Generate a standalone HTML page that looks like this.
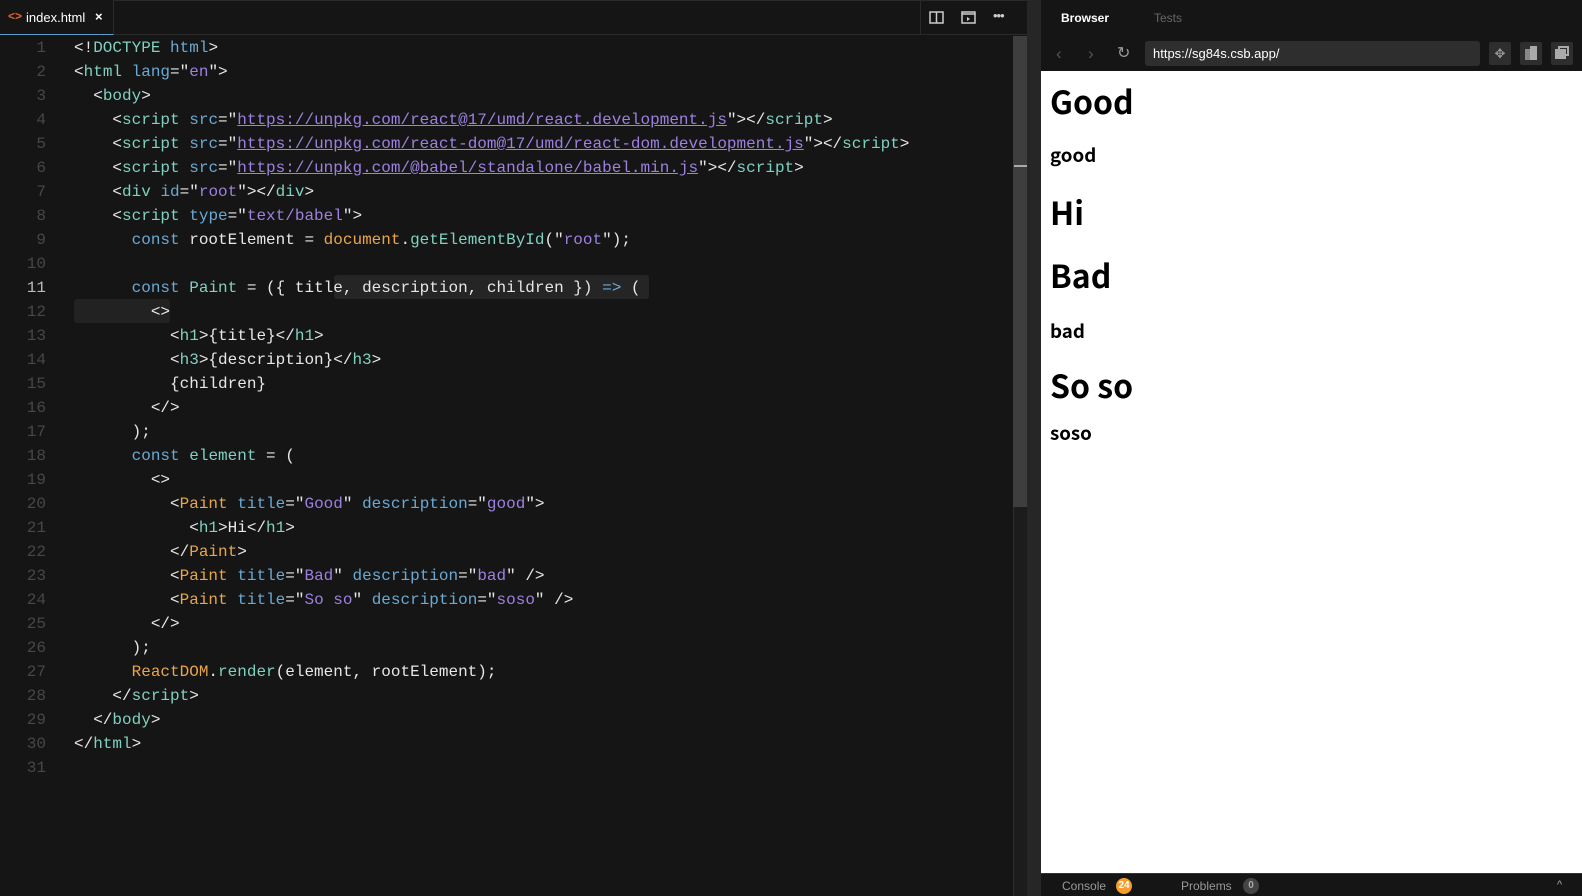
<!DOCTYPE html>
<html><head><meta charset="utf-8"><style>
*{margin:0;padding:0;box-sizing:border-box}
body{width:1582px;height:896px;background:#151515;position:relative;overflow:hidden;font-family:"Liberation Sans",sans-serif}
.topbar{position:absolute;left:0;top:0;width:1027px;height:35px;background:#151515;border-bottom:1px solid #2a2a2a;border-top:1px solid #2a2a2a}
.tab{position:absolute;left:0;top:0;width:114px;height:35px;background:#151515;border-right:1px solid #2a2a2a;border-bottom:1px solid #5a9fd0;color:#fff;font-size:13px}
.code{position:absolute;left:0;top:0;font-family:"Liberation Mono",monospace;font-size:16px;color:#e6e6e6}
.ln{position:absolute;left:0;width:46px;text-align:right;color:#474747;line-height:24px;height:24px}
.cl{position:absolute;left:74px;line-height:24px;height:24px;white-space:pre}
.t{color:#7fd1c0}.a{color:#6aa9d4}.s{color:#9d80e0}.u{color:#9d80e0;text-decoration:underline}.o{color:#e8a64b}.k{color:#6aa9d4}.f{color:#7fd1c0}
.prev{position:absolute;left:1041px;top:71px;width:541px;height:802px;background:#fff}
.h1{position:absolute;left:9px;font-family:"Noto Sans CJK KR",sans-serif;font-weight:bold;font-size:32px;line-height:32px;color:#000}
.h3{position:absolute;left:9px;font-family:"Noto Sans CJK KR",sans-serif;font-weight:bold;font-size:18.7px;line-height:19px;color:#000}
</style></head><body>
<div class="topbar"></div>
<div class="tab"><span style="position:absolute;left:8px;top:9px;color:#e8622c;font-size:12px;font-weight:bold">&lt;&gt;</span><span style="position:absolute;left:26px;top:10px">index.html</span><span style="position:absolute;left:95px;top:9px;font-weight:bold">×</span></div>
<div style="position:absolute;left:920px;top:0;width:1px;height:35px;background:#2a2a2a"></div>
<svg style="position:absolute;left:929px;top:11px" width="16" height="14"><rect x="1" y="1" width="13" height="11" fill="none" stroke="#ccc" stroke-width="1.5"/><line x1="7.5" y1="1" x2="7.5" y2="12" stroke="#ccc" stroke-width="1.5"/></svg>
<svg style="position:absolute;left:961px;top:11px" width="16" height="14"><rect x="1" y="1" width="13" height="11" fill="none" stroke="#ccc" stroke-width="1.5"/><line x1="1" y1="3" x2="14" y2="3" stroke="#ccc" stroke-width="1.5"/><path d="M6 6l3 2-3 2z" fill="#ccc"/></svg>
<div style="position:absolute;left:993px;top:8px;color:#ccc;font-size:13px;letter-spacing:-1px">•••</div>
<div style="position:absolute;left:1013px;top:36px;width:14px;height:860px;background:#1c1c1c;border-left:1px solid #2e2e2e"></div>
<div style="position:absolute;left:1013px;top:36px;width:14px;height:471px;background:#3e3e3e"></div>
<div style="position:absolute;left:1014px;top:165px;width:13px;height:2px;background:#aaa"></div>
<div style="position:absolute;left:1027px;top:0;width:14px;height:896px;background:#262626"></div>
<div style="position:absolute;left:1041px;top:0;width:541px;height:71px;background:#151515"></div>
<div style="position:absolute;left:1061px;top:11px;color:#fff;font-size:12px;font-weight:bold">Browser</div>
<div style="position:absolute;left:1154px;top:11px;color:#666;font-size:12px">Tests</div>
<div style="position:absolute;left:1056px;top:44px;color:#555;font-size:17px">‹</div>
<div style="position:absolute;left:1088px;top:44px;color:#555;font-size:17px">›</div>
<div style="position:absolute;left:1117px;top:43px;color:#999;font-size:16px">↻</div>
<div style="position:absolute;left:1145px;top:41px;width:335px;height:25px;background:#2e2e2e;border-radius:3px;color:#fff;font-size:13px;padding:5px 8px">https://sg84s.csb.app/</div>
<div style="position:absolute;left:1489px;top:42px;width:22px;height:23px;background:#2e2e2e;border-radius:2px;color:#999;font-size:13px;text-align:center;line-height:23px">✥</div>
<div style="position:absolute;left:1520px;top:42px;width:22px;height:23px;background:#2e2e2e;border-radius:2px"><div style="position:absolute;left:5px;top:7px;width:6px;height:11px;background:#888"></div><div style="position:absolute;left:10px;top:4px;width:7px;height:14px;background:#aaa"></div></div>
<div style="position:absolute;left:1551px;top:42px;width:22px;height:23px;background:#2e2e2e;border-radius:2px"><div style="position:absolute;left:4px;top:7px;width:11px;height:10px;background:#aaa"></div><div style="position:absolute;left:7px;top:4px;width:11px;height:10px;border:2px solid #aaa"></div></div>
<div class="prev">
<div class="h1" style="top:14px">Good</div>
<div class="h3" style="top:74px">good</div>
<div class="h1" style="top:125px">Hi</div>
<div class="h1" style="top:188px">Bad</div>
<div class="h3" style="top:250px">bad</div>
<div class="h1" style="top:298px">So so</div>
<div class="h3" style="top:352px">soso</div>
</div>
<div style="position:absolute;left:1041px;top:873px;width:541px;height:23px;background:#151515;border-top:1px solid #333"></div>
<div style="position:absolute;left:1062px;top:879px;color:#999;font-size:12px">Console</div>
<div style="position:absolute;left:1116px;top:878px;width:16px;height:16px;border-radius:8px;background:#f69d2c;color:#fff;font-size:10px;font-weight:bold;text-align:center;line-height:16px">24</div>
<div style="position:absolute;left:1181px;top:879px;color:#999;font-size:12px">Problems</div>
<div style="position:absolute;left:1243px;top:878px;width:16px;height:16px;border-radius:8px;background:#444;color:#aaa;font-size:10px;font-weight:bold;text-align:center;line-height:16px">0</div>
<div style="position:absolute;left:1557px;top:879px;color:#aaa;font-size:11px">^</div>
<div style="position:absolute;left:334px;top:275px;width:315px;height:24px;background:#252525;border-radius:3px"></div>
<div style="position:absolute;left:74px;top:299px;width:96px;height:24px;background:#222;border-radius:3px"></div>
<div class="code">
<div class="ln" style="top:36px">1</div><div class="cl" style="top:36px">&lt;!<span class="t">DOCTYPE</span> <span class="a">html</span>&gt;</div>
<div class="ln" style="top:60px">2</div><div class="cl" style="top:60px">&lt;<span class="t">html</span> <span class="a">lang</span>="<span class="s">en</span>"&gt;</div>
<div class="ln" style="top:84px">3</div><div class="cl" style="top:84px">  &lt;<span class="t">body</span>&gt;</div>
<div class="ln" style="top:108px">4</div><div class="cl" style="top:108px">    &lt;<span class="t">script</span> <span class="a">src</span>="<span class="u">https://unpkg.com/react@17/umd/react.development.js</span>"&gt;&lt;/<span class="t">script</span>&gt;</div>
<div class="ln" style="top:132px">5</div><div class="cl" style="top:132px">    &lt;<span class="t">script</span> <span class="a">src</span>="<span class="u">https://unpkg.com/react-dom@17/umd/react-dom.development.js</span>"&gt;&lt;/<span class="t">script</span>&gt;</div>
<div class="ln" style="top:156px">6</div><div class="cl" style="top:156px">    &lt;<span class="t">script</span> <span class="a">src</span>="<span class="u">https://unpkg.com/@babel/standalone/babel.min.js</span>"&gt;&lt;/<span class="t">script</span>&gt;</div>
<div class="ln" style="top:180px">7</div><div class="cl" style="top:180px">    &lt;<span class="t">div</span> <span class="a">id</span>="<span class="s">root</span>"&gt;&lt;/<span class="t">div</span>&gt;</div>
<div class="ln" style="top:204px">8</div><div class="cl" style="top:204px">    &lt;<span class="t">script</span> <span class="a">type</span>="<span class="s">text/babel</span>"&gt;</div>
<div class="ln" style="top:228px">9</div><div class="cl" style="top:228px">      <span class="k">const</span> rootElement = <span class="o">document</span>.<span class="f">getElementById</span>("<span class="s">root</span>");</div>
<div class="ln" style="top:252px">10</div>
<div class="ln" style="top:276px;color:#bbb">11</div><div class="cl" style="top:276px">      <span class="k">const</span> <span class="f">Paint</span> = ({ title, description, children }) <span class="k">=&gt;</span> (</div>
<div class="ln" style="top:300px">12</div><div class="cl" style="top:300px">        &lt;&gt;</div>
<div class="ln" style="top:324px">13</div><div class="cl" style="top:324px">          &lt;<span class="t">h1</span>&gt;{title}&lt;/<span class="t">h1</span>&gt;</div>
<div class="ln" style="top:348px">14</div><div class="cl" style="top:348px">          &lt;<span class="t">h3</span>&gt;{description}&lt;/<span class="t">h3</span>&gt;</div>
<div class="ln" style="top:372px">15</div><div class="cl" style="top:372px">          {children}</div>
<div class="ln" style="top:396px">16</div><div class="cl" style="top:396px">        &lt;/&gt;</div>
<div class="ln" style="top:420px">17</div><div class="cl" style="top:420px">      );</div>
<div class="ln" style="top:444px">18</div><div class="cl" style="top:444px">      <span class="k">const</span> <span class="f">element</span> = (</div>
<div class="ln" style="top:468px">19</div><div class="cl" style="top:468px">        &lt;&gt;</div>
<div class="ln" style="top:492px">20</div><div class="cl" style="top:492px">          &lt;<span class="o">Paint</span> <span class="a">title</span>="<span class="s">Good</span>" <span class="a">description</span>="<span class="s">good</span>"&gt;</div>
<div class="ln" style="top:516px">21</div><div class="cl" style="top:516px">            &lt;<span class="t">h1</span>&gt;Hi&lt;/<span class="t">h1</span>&gt;</div>
<div class="ln" style="top:540px">22</div><div class="cl" style="top:540px">          &lt;/<span class="o">Paint</span>&gt;</div>
<div class="ln" style="top:564px">23</div><div class="cl" style="top:564px">          &lt;<span class="o">Paint</span> <span class="a">title</span>="<span class="s">Bad</span>" <span class="a">description</span>="<span class="s">bad</span>" /&gt;</div>
<div class="ln" style="top:588px">24</div><div class="cl" style="top:588px">          &lt;<span class="o">Paint</span> <span class="a">title</span>="<span class="s">So so</span>" <span class="a">description</span>="<span class="s">soso</span>" /&gt;</div>
<div class="ln" style="top:612px">25</div><div class="cl" style="top:612px">        &lt;/&gt;</div>
<div class="ln" style="top:636px">26</div><div class="cl" style="top:636px">      );</div>
<div class="ln" style="top:660px">27</div><div class="cl" style="top:660px">      <span class="o">ReactDOM</span>.<span class="f">render</span>(element, rootElement);</div>
<div class="ln" style="top:684px">28</div><div class="cl" style="top:684px">    &lt;/<span class="t">script</span>&gt;</div>
<div class="ln" style="top:708px">29</div><div class="cl" style="top:708px">  &lt;/<span class="t">body</span>&gt;</div>
<div class="ln" style="top:732px">30</div><div class="cl" style="top:732px">&lt;/<span class="t">html</span>&gt;</div>
<div class="ln" style="top:756px">31</div>
</div>
</body></html>
